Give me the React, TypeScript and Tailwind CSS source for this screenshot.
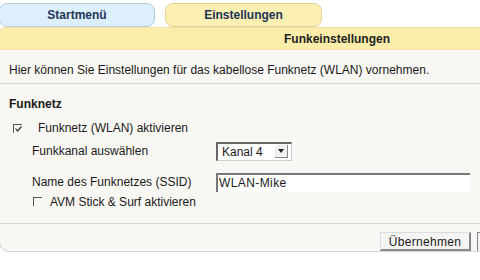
export default function App() {
  return (
    <div className="w-[480px] h-[280px] overflow-hidden bg-white font-['Liberation_Sans',Arial,sans-serif] text-[12px] text-[#1a1a1a]">
      <div className="flex gap-[10px] pt-[3px] h-[27px]">
        <div className="w-[156px] h-[24px] -ml-[1px] rounded-[8px] border border-[#b9cbdc] bg-[#ddeefc] flex items-center justify-center font-bold text-[#1d3658]">
          Startmenü
        </div>
        <div className="w-[157px] h-[24px] rounded-[8px] border border-[#e2d196] bg-[#fcefb2] flex items-center justify-center font-bold text-[#1d3658]">
          Einstellungen
        </div>
      </div>
      <div className="w-[640px] -ml-[1px] border border-[#f0e2a8] bg-[#fcedaa] rounded-tl-[6px] h-[23px] flex items-center pl-[284px] font-bold text-[#222]">
        Funkeinstellungen
      </div>
      <div className="w-[490px] -ml-[1px] bg-[#f8f7f3] border-b border-l border-[#d6d4cc] rounded-bl-[10px] h-[202px] flex flex-col">
        <div className="h-[34px] border-b border-[#d9d8d2] pl-[9px] pt-[11px]">
          Hier können Sie Einstellungen für das kabellose Funknetz (WLAN) vornehmen.
        </div>
        <div className="h-[140px] border-b border-[#d9d8d2] pl-[9px] pt-[11px]">
          <div className="font-bold h-[17px]">Funknetz</div>
          <div className="flex items-center h-[18px] mt-[7px]">
            <span className="relative w-[9px] h-[9px] ml-[4px] mr-[16px] border-l border-t border-[#555]">
              <svg className="absolute left-[1px] top-[1px]" width="7" height="6" viewBox="0 0 7 6">
                <path d="M0.5 2.5 L2.5 5 L6.5 0.5" fill="none" stroke="#333" strokeWidth="1.2" />
              </svg>
            </span>
            <span>Funknetz (WLAN) aktivieren</span>
          </div>
          <div className="flex items-center h-[22px] mt-[3px] pl-[23px]">
            <span className="w-[184px]">Funkkanal auswählen</span>
            <div className="w-[76px] h-[19px] bg-white border-l-2 border-t-2 border-[#666] border-r border-b border-r-[#ccc] border-b-[#ccc] flex items-center justify-between pl-[4px] pr-[3px]">
              <span>Kanal 4</span>
              <span className="w-[13px] h-[13px] bg-[#f1f1f1] border-r border-b border-[#888] flex items-center justify-center">
                <span className="w-0 h-0 border-l-[3px] border-r-[3px] border-t-[4px] border-l-transparent border-r-transparent border-t-[#222]"></span>
              </span>
            </div>
          </div>
          <div className="flex items-center h-[22px] mt-[9px] pl-[23px]">
            <span className="w-[184px]">Name des Funknetzes (SSID)</span>
            <div className="w-[254px] h-[19px] bg-white border-l-2 border-t-2 border-[#777] flex items-center pl-[1px] tracking-[0.4px]">
              WLAN-Mike
            </div>
          </div>
          <div className="flex items-center h-[17px] pl-[24px]">
            <span className="w-[9px] h-[9px] mr-[8px] border-l border-t border-[#555]"></span>
            <span>AVM Stick &amp; Surf aktivieren</span>
          </div>
        </div>
        <div className="flex justify-end gap-[6px] pt-[8px] pr-[2px]">
          <button className="w-[91px] h-[19px] bg-[#f4f4f4] border-t border-l border-[#ddd] border-r-2 border-b-2 border-r-[#888] border-b-[#888] text-[12px] tracking-[0.3px]">
            Übernehmen
          </button>
          <button className="w-[10px] h-[19px] bg-[#f4f4f4] border-t border-l border-[#888]"></button>
        </div>
      </div>
    </div>
  );
}
